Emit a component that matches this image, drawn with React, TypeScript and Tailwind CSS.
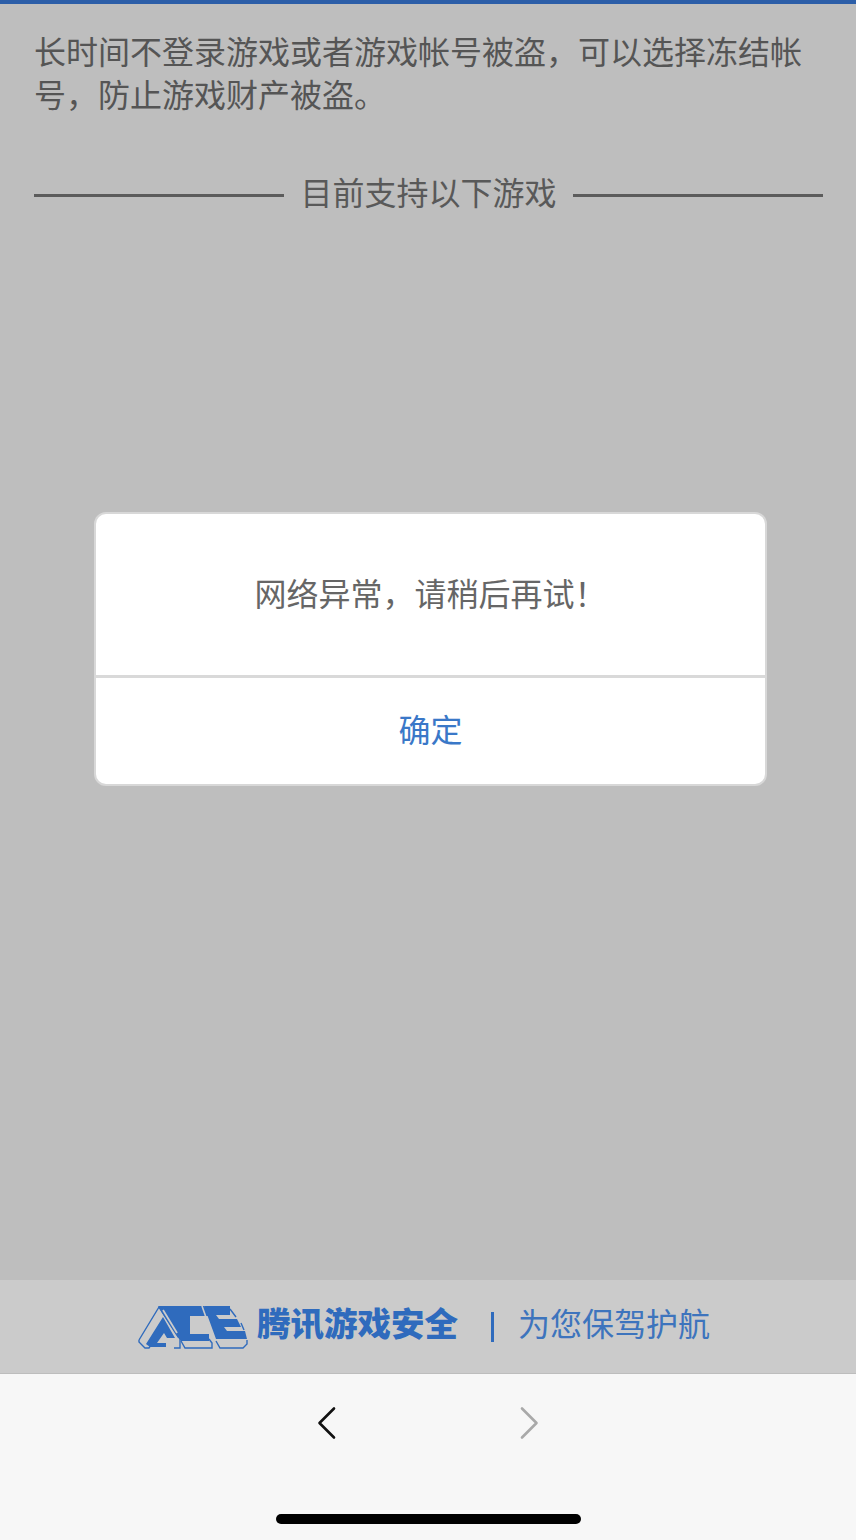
const cjk = "font-['Noto_Sans_CJK_SC','Liberation_Sans',sans-serif]";

function AceLogo() {
  return (
    <svg width="110" height="44" viewBox="0 0 110 44" className="shrink-0">
      {/* A outline */}
      <path d="M1 35 L21 2 M1 35 V37 L7 43 H11 L15 37" fill="none" stroke="#2f6bbd" strokeWidth="1.4" />
      <path d="M21 2 L42 34 V43 H36" fill="none" stroke="#2f6bbd" strokeWidth="1.4" />
      {/* A solid */}
      <path d="M8 39 L25 12 L37 33 H29 L26 28 L19 38 H28 V42 H12 Z" fill="#2f6bbd" />
      {/* top band + C */}
      <path d="M20 1 H66 L73 11 H40 V33 L36 27 L24 8 Z" fill="#2f6bbd" />
      <path d="M40 11 H52 V29 H71 V36 H43 L40 32 Z" fill="#2f6bbd" />
      <path d="M43 36 L47 43 H74 V38 L71 34" fill="none" stroke="#2f6bbd" strokeWidth="1.4" />
      {/* E */}
      <path d="M66 1 H92 V10 H78 L81 14 H99 L103 22 H86 L89 26 H107 L109 34 H78 L70 12 Z" fill="#2f6bbd" />
      <path d="M92 4 L98 12 M103 18 L106 25" stroke="#2f6bbd" strokeWidth="1.4" />
      <path d="M78 36 L82 43 H105 L109 39 V35" fill="none" stroke="#2f6bbd" strokeWidth="1.4" />
      {/* light separators between the letters */}
      <path d="M25 5 L39 28" stroke="#cbcbcb" strokeWidth="1.8" />
      <path d="M64 1 L76 35" stroke="#cbcbcb" strokeWidth="1.6" />
    </svg>
  );
}

function Chevron({ dir, color }: { dir: 'left' | 'right'; color: string }) {
  return (
    <svg width="22" height="36" viewBox="0 0 22 36" fill="none">
      <path
        d={dir === 'left' ? 'M18 3.5 L3.5 18 L18 32.5' : 'M4 3.5 L18.5 18 L4 32.5'}
        stroke={color}
        strokeWidth="2.6"
        strokeLinecap="round"
        strokeLinejoin="round"
      />
    </svg>
  );
}

export default function App() {
  return (
    <div className={`relative flex h-[1540px] w-[856px] flex-col overflow-hidden bg-[#bebebe] ${cjk}`}>
      <div className="h-1 bg-[#2c5ea8]" />

      <main className="flex-1 pl-[34px] pr-[33px] pt-[25px]">
        <p className="text-[32px] leading-[43px] text-[#555555]">
          长时间不登录游戏或者游戏帐号被盗，可以选择冻结帐号，防止游戏财产被盗。
        </p>
        <div className="mt-[53px] flex items-center justify-between text-[32px] leading-[46px] text-[#595959]">
          <div className="h-[3px] w-[250px] bg-[#5c5c5c]" />
          <span className="pb-2">目前支持以下游戏</span>
          <div className="h-[3px] w-[250px] bg-[#5c5c5c]" />
        </div>
      </main>

      <footer className="flex h-[93px] items-center bg-[#cbcbcb] pl-[138px]">
        <AceLogo />
        <span className="ml-[9px] pb-[10px] text-[33.5px] font-black leading-none text-[#2f6bbd]">腾讯游戏安全</span>
        <div className="ml-[33px] h-[30px] w-[3px] bg-[#2f6bbd]" />
        <span className="ml-[24px] pb-[10px] text-[32px] leading-none text-[#3d74bd]">为您保驾护航</span>
      </footer>

      <nav className="relative h-[167px] border-t border-[#bdbdbd] bg-[#f7f7f7]">
        <div className="flex justify-center gap-[180px] pt-[31px]">
          <Chevron dir="left" color="#111111" />
          <Chevron dir="right" color="#a9a9a9" />
        </div>
        <div className="absolute bottom-[16px] left-[276px] h-[10px] w-[305px] rounded-full bg-black" />
      </nav>

      <div className="absolute left-[94px] top-[512px] w-[673px] overflow-hidden rounded-[12px] border-2 border-[#d8d8d8] bg-white">
        <div className="flex h-[161px] items-center justify-center pb-[6px] text-[32px] text-[#666666]">
          网络异常，请稍后再试！
        </div>
        <div className="flex h-[109px] items-center justify-center border-t-[3px] border-[#d9d9d9] pb-[6px] text-[32px] text-[#3a78c8]">
          确定
        </div>
      </div>
    </div>
  );
}
